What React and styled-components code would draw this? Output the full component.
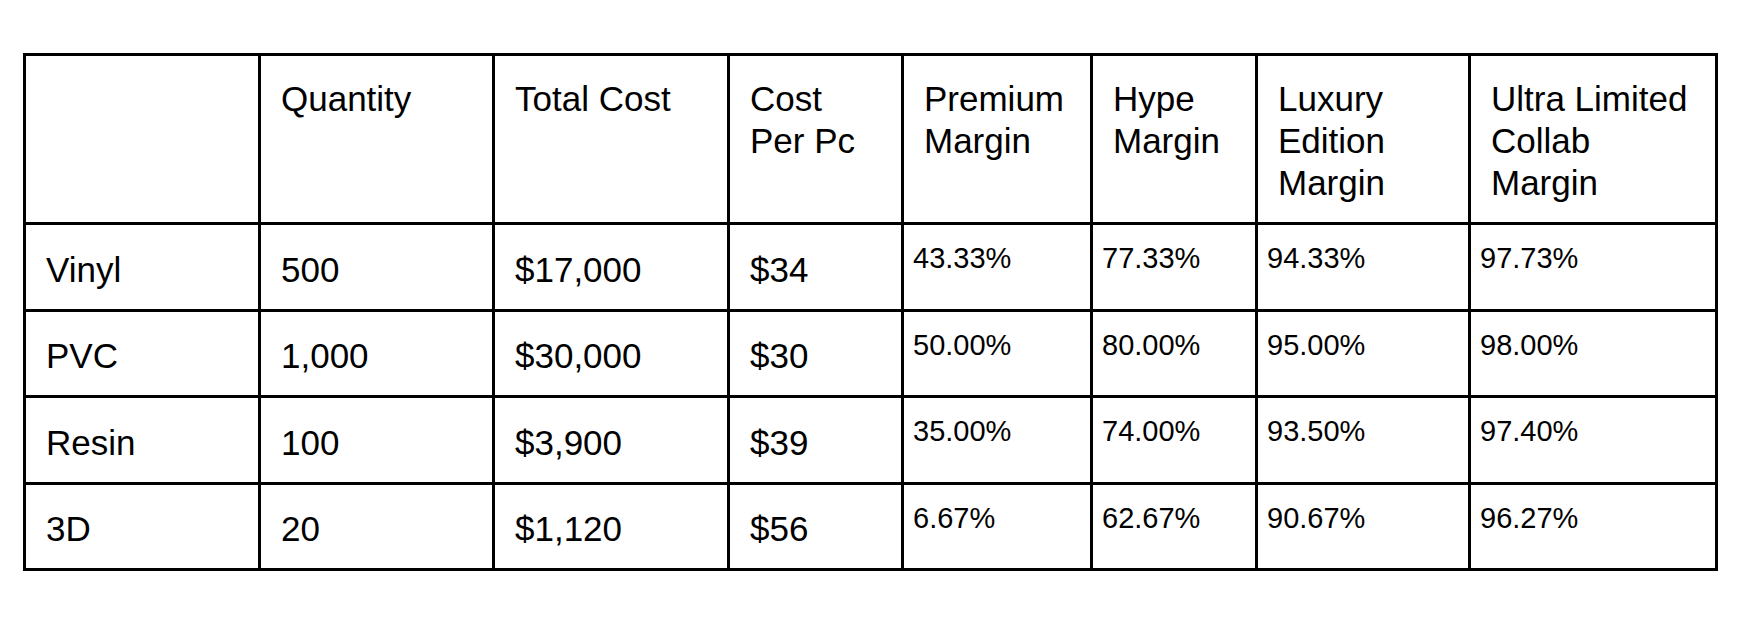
import React from 'react';
import styled, { createGlobalStyle } from 'styled-components';

const GlobalStyle = createGlobalStyle`
  html, body {
    margin: 0;
    padding: 0;
    background: #ffffff;
  }
  body {
    font-family: "Liberation Sans", Arial, sans-serif;
    color: #000000;
  }
`;

const Page = styled.div`
  padding: 53px 0 0 23px;
  width: 1747px;
  height: 623px;
  box-sizing: border-box;
  overflow: hidden;
`;

const Table = styled.table`
  border-collapse: collapse;
  table-layout: fixed;
  width: 1695px;
`;

const HeadCell = styled.th`
  border: 3px solid #000;
  height: 169px;
  padding: 22px 4px 0 20px;
  vertical-align: top;
  text-align: left;
  font-weight: 400;
  font-size: 35px;
  line-height: 42px;
  white-space: nowrap;
  box-sizing: border-box;
`;

const Cell = styled.td`
  border: 3px solid #000;
  height: ${({ $h }) => $h}px;
  box-sizing: border-box;
  text-align: left;
  white-space: nowrap;
  font-size: ${({ $small }) => ($small ? '29px' : '35px')};
  line-height: ${({ $small }) => ($small ? '34px' : '40px')};
  vertical-align: ${({ $small }) => ($small ? 'top' : 'middle')};
  padding: ${({ $small }) => ($small ? '16px 4px 0 9px' : '5px 4px 0 20px')};
`;

const widths = [235, 234, 235, 174, 189, 165, 213, 247];

const headers = [
  [],
  ['Quantity'],
  ['Total Cost'],
  ['Cost', 'Per Pc'],
  ['Premium', 'Margin'],
  ['Hype', 'Margin'],
  ['Luxury', 'Edition', 'Margin'],
  ['Ultra Limited', 'Collab', 'Margin'],
];

const rows = [
  { h: 87, cells: ['Vinyl', '500', '$17,000', '$34', '43.33%', '77.33%', '94.33%', '97.73%'] },
  { h: 86, cells: ['PVC', '1,000', '$30,000', '$30', '50.00%', '80.00%', '95.00%', '98.00%'] },
  { h: 87, cells: ['Resin', '100', '$3,900', '$39', '35.00%', '74.00%', '93.50%', '97.40%'] },
  { h: 86, cells: ['3D', '20', '$1,120', '$56', '6.67%', '62.67%', '90.67%', '96.27%'] },
];

export default function App() {
  return (
    <>
      <GlobalStyle />
      <Page>
        <Table>
          <colgroup>
            {widths.map((w, i) => <col key={i} style={{ width: w }} />)}
          </colgroup>
          <thead>
            <tr>
              {headers.map((lines, i) => (
                <HeadCell key={i}>
                  {lines.map((line, j) => (
                    <React.Fragment key={line}>
                      {j > 0 ? <br /> : null}
                      {line}
                    </React.Fragment>
                  ))}
                </HeadCell>
              ))}
            </tr>
          </thead>
          <tbody>
            {rows.map(row => (
              <tr key={row.cells[0]}>
                {row.cells.map((value, i) => (
                  <Cell key={i} $h={row.h} $small={i >= 4}>{value}</Cell>
                ))}
              </tr>
            ))}
          </tbody>
        </Table>
      </Page>
    </>
  );
}
